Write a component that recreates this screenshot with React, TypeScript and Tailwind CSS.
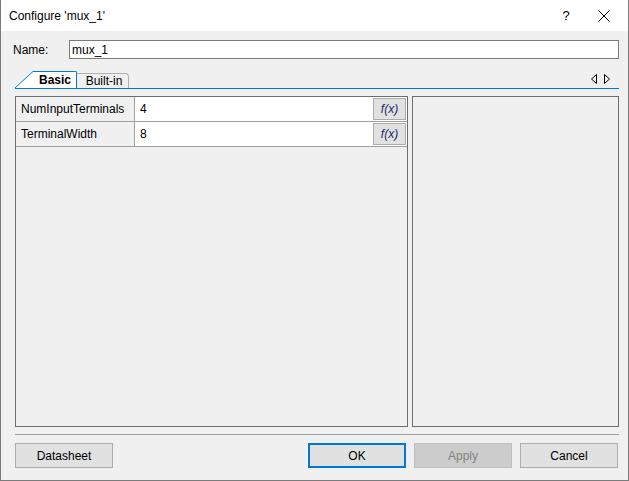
import React from "react";

const font = { fontFamily: '"Liberation Sans", Arial, sans-serif' };

function Btn({ label, variant }: { label: string; variant?: "ok" | "disabled" }) {
  const base = "w-[98px] h-[25px] flex items-center justify-center text-[12px]";
  if (variant === "ok")
    return <div className={`${base} bg-[#e1e1e1] border-2 border-[#0078d7] text-black`}>{label}</div>;
  if (variant === "disabled")
    return <div className={`${base} bg-[#cccccc] border border-[#bfbfbf] text-[#838383]`}>{label}</div>;
  return <div className={`${base} bg-[#e1e1e1] border border-[#adadad] text-black`}>{label}</div>;
}

function Row({ name, value }: { name: string; value: string }) {
  return (
    <div className="flex h-[25px] border-b border-[#a0a0a0]">
      <div className="w-[119px] border-r border-[#a0a0a0] flex items-center pl-[5px] text-[12px] text-black">{name}</div>
      <div className="flex-1 bg-white flex items-center pl-[5px] text-[12px] text-black">{value}</div>
      <div className="bg-white flex items-center pr-[1px]">
        <div className="w-[33px] h-[22px] bg-[#e1e1e1] border border-[#adadad] flex items-center justify-center text-[12px] italic text-[#1c2a6b]">
          f(x)
        </div>
      </div>
    </div>
  );
}

export default function App() {
  return (
    <div className="w-[629px] h-[481px] flex flex-col border-x border-b border-[#7a7a7a] bg-[#f0f0f0] overflow-hidden" style={font}>
      {/* Title bar */}
      <div className="h-[31px] bg-white flex items-center shrink-0">
        <div className="pl-[8px] text-[12px] text-black flex-1">Configure 'mux_1'</div>
        <div className="w-[20px] text-[13px] text-black mr-[22px] text-center">?</div>
        <svg width="12" height="12" viewBox="0 0 12 12" className="mr-[18px]">
          <path d="M0.5 0.5 L11.5 11.5 M11.5 0.5 L0.5 11.5" stroke="#000" strokeWidth="1" />
        </svg>
      </div>

      {/* Body */}
      <div className="flex-1 flex flex-col pl-[14px]">
        <div className="w-[604px] flex flex-col">
          {/* Name row */}
          <div className="flex items-center mt-[9px] h-[19px]">
            <div className="-ml-[2px] w-[56px] text-[12px] text-black">Name:</div>
            <div className="w-[550px] h-[19px] bg-white border border-[#7a7a7a] flex items-center pl-[2px] text-[12px] text-black">
              mux_1
            </div>
          </div>

          {/* Tabs */}
          <div className="mt-[12px] h-[18px] flex items-end border-b border-[#0078d7]">
            <svg width="18" height="17" viewBox="0 0 18 17" className="block">
              <polygon points="0,17 18,0 18,17" fill="#ffffff" />
              <line x1="0" y1="17" x2="18" y2="0.5" stroke="#0078d7" strokeWidth="1" />
            </svg>
            <div className="w-[44px] h-[17px] bg-white border-t border-r border-[#0078d7] rounded-tr-[2px] flex items-center justify-center text-[12px] font-bold text-black pl-[1px]">
              Basic
            </div>
            <div className="w-[52px] h-[15px] bg-[#f0f0f0] border-t border-r border-[#b0b0b0] rounded-tr-[4px] flex items-center justify-center text-[12px] text-black pl-[3px]">
              Built-in
            </div>
            <div className="flex-1" />
            <div className="flex items-center gap-[7px] self-center mb-[2px] mr-[9px]">
              <svg width="6" height="10" viewBox="0 0 6 10">
                <polygon points="5.5,0.5 0.5,5 5.5,9.5" fill="none" stroke="#000" strokeWidth="1" />
              </svg>
              <svg width="6" height="10" viewBox="0 0 6 10">
                <polygon points="0.5,0.5 5.5,5 0.5,9.5" fill="none" stroke="#000" strokeWidth="1" />
              </svg>
            </div>
          </div>

          {/* Panels */}
          <div className="mt-[7px] flex gap-[4px] h-[331px]">
            <div className="w-[393px] border border-[#6d6d6d] flex flex-col">
              <Row name="NumInputTerminals" value="4" />
              <Row name="TerminalWidth" value="8" />
            </div>
            <div className="w-[207px] border border-[#6d6d6d]" />
          </div>

          {/* Separator */}
          <div className="mt-[7px] h-[1px] bg-[#a0a0a0]" />

          {/* Buttons */}
          <div className="mt-[8px] flex justify-between">
            <Btn label="Datasheet" />
            <div className="flex gap-[8px] mr-[1px]">
              <Btn label="OK" variant="ok" />
              <Btn label="Apply" variant="disabled" />
              <Btn label="Cancel" />
            </div>
          </div>
        </div>
      </div>
    </div>
  );
}
